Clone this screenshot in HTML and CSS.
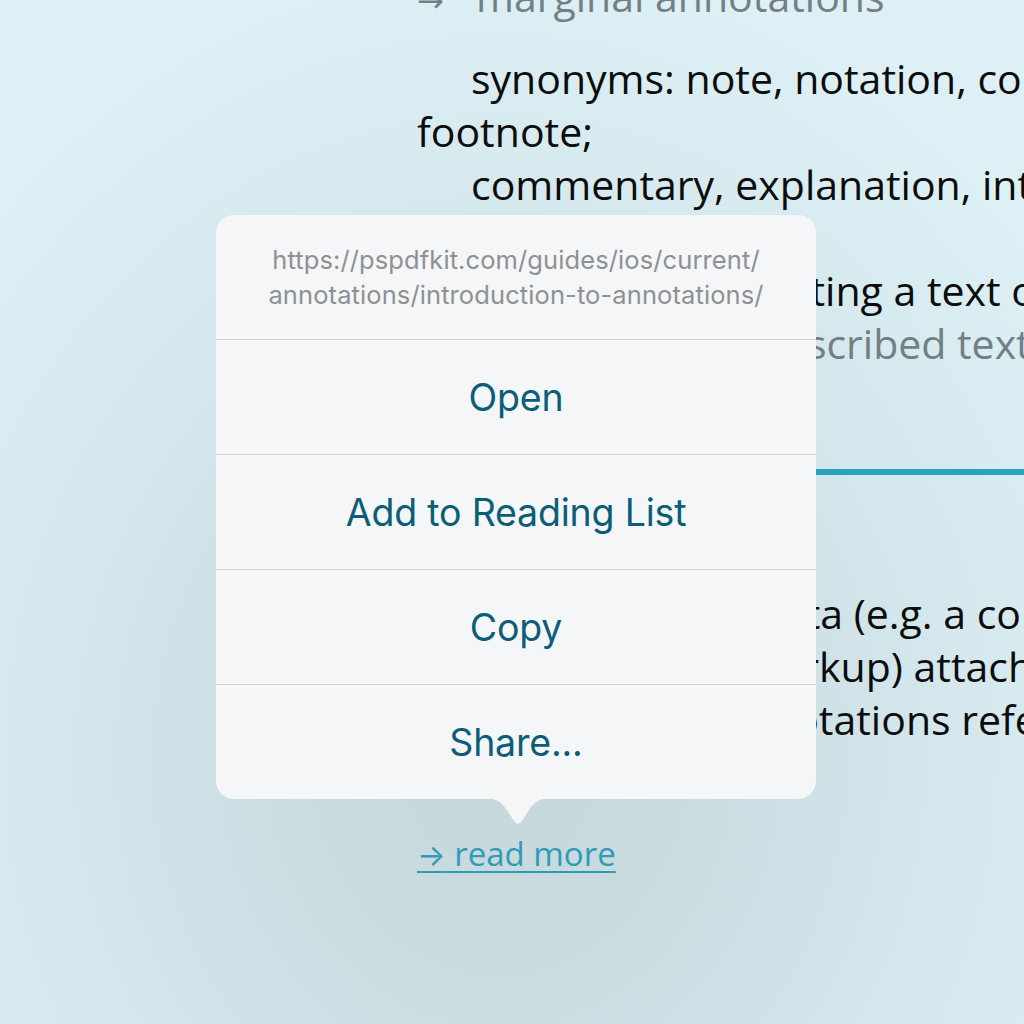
FILE: index.html
```html
<!DOCTYPE html>
<html lang="en">
<head>
<meta charset="utf-8">
<title>Annotation</title>
<link rel="stylesheet" href="styles.css">
</head>
<body>
<main class="doc">
  <div class="line example"><span class="arr">→</span>marginal annotations</div>
  <div class="group">
    <div class="line indent">synonyms: note, notation, comment, gloss,</div>
    <div class="line">footnote;</div>
    <div class="line indent">commentary, explanation, interpretation,</div>
    <div class="line">exegesis;</div>
  </div>
  <div class="line">The action of annotating a text or diagram.</div>
  <div class="line example"><span class="arr">→</span>annotating a transcribed text</div>
  <hr class="rule">
  <div class="para">
    <div class="line">is additional metadata (e.g. a comment, a note,</div>
    <div class="line">in any other text markup) attached to a page.</div>
    <div class="line">In PSPDFKit the annotations refer to objects</div>
  </div>
  <a class="more" href="#"><span class="more-arr">→</span> read more</a>
</main>

<div class="popover">
  <div class="url">https://pspdfkit.com/guides/ios/current/<br>annotations/introduction-to-annotations/</div>
  <div class="item">Open</div>
  <div class="item">Add to Reading List</div>
  <div class="item">Copy</div>
  <div class="item">Share...</div>
  <svg class="tip" width="70" height="28" viewBox="0 0 70 28"><path d="M0 0 C14 0 18 4 24 12 L31 23 Q35 28.5 39 23 L46 12 C52 4 56 0 70 0 Z" fill="#f4f6f7"/></svg>
</div>
</body>
</html>
```
FILE: styles.css
```css
html, body {
  margin: 0;
  padding: 0;
  width: 1024px;
  height: 1024px;
  overflow: hidden;
}
body {
  background: radial-gradient(ellipse 700px 800px at 500px 760px, #c6d8dc 0%, #c8dbdf 25%, #d2e6eb 60%, #dcf0f5 100%);
  font-family: "Open Sans", "Noto Sans", sans-serif;
  color: #0c0c0c;
  position: relative;
}
.doc {
  margin-top: -30px;
  padding-left: 417px;
  width: 1200px;
  font-size: 41px;
  line-height: 53px;
}
.line {
  white-space: nowrap;
}
.indent {
  padding-left: 54px;
}
.example {
  color: #737f84;
}
.arr {
  display: inline-block;
  width: 59px;
  font-family: "DejaVu Sans", sans-serif;
  font-size: 32px;
}
.group {
  margin-top: 24px;
}
.rule {
  border: none;
  height: 6px;
  background: #2aa3bf;
  margin: 94px 0 0 0;
}
.para {
  margin-top: 112px;
}
.more {
  display: inline-block;
  margin-top: 85px;
  font-size: 33px;
  line-height: 46px;
  color: #2e9cb8;
  text-decoration: underline;
  text-decoration-thickness: 2px;
  text-underline-offset: 5px;
}
.more-arr {
  font-family: Inter, "DejaVu Sans", sans-serif;
  font-size: 30px;
}
.popover {
  position: absolute;
  left: 216px;
  top: 215px;
  width: 600px;
  background: #f4f6f7;
  border-radius: 18px;
  font-family: Inter, "Noto Sans", sans-serif;
}
.url {
  padding: 27px 0;
  font-size: 25.5px;
  line-height: 35px;
  color: #8e9194;
  text-align: center;
  letter-spacing: 0.1px;
}
.item {
  height: 114px;
  border-top: 1px solid #d2d5d8;
  display: flex;
  align-items: center;
  justify-content: center;
  font-size: 37.5px;
  color: #0b5d78;
  letter-spacing: -0.2px;
}
.tip {
  position: absolute;
  left: 267px;
  top: 583px;
  display: block;
}
```
